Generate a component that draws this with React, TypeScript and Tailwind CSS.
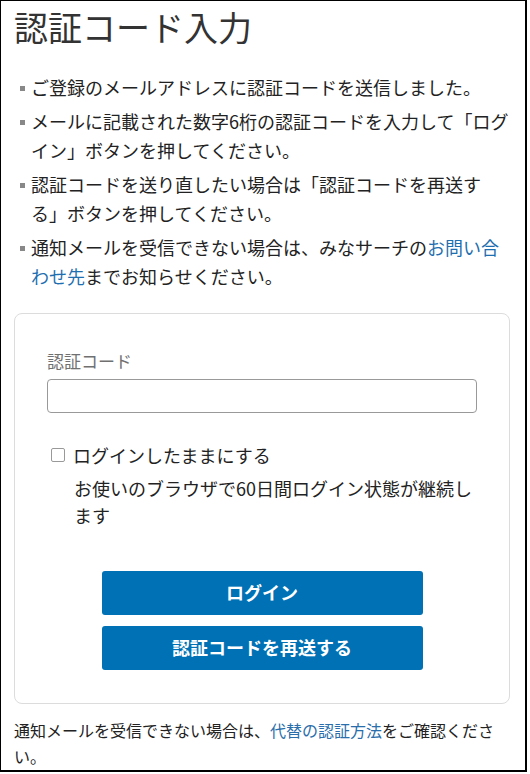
const notes = [
    { text: "ご登録のメールアドレスに認証コードを送信しました。" },
    { text: "メールに記載された数字6桁の認証コードを入力して「ログイン」ボタンを押してください。" },
    { text: "認証コードを送り直したい場合は「認証コードを再送する」ボタンを押してください。" },
]

function Bullet({ children }: { children: React.ReactNode }) {
    return (
        <li className="flex">
            <span className="w-[17px] shrink-0 flex pt-[13px] pl-[6px]">
                <span className="block w-[5px] h-[5px] bg-[#888]" />
            </span>
            <span className="flex-1">{children}</span>
        </li>
    )
}

export default function App() {
    return (
        <div
            className="w-[527px] h-[772px] border-l border-t border-r-2 border-b-2 border-black bg-white text-[#333] overflow-hidden [text-spacing-trim:space-all]"
            style={{ fontFamily: '"Noto Sans CJK JP", "Noto Sans", sans-serif' }}
        >
            <div className="w-[509px] pl-[13px] pt-[4px]">
                <h1 className="text-[34px] leading-[44px] font-normal text-[#333]">認証コード入力</h1>

                <ul className="mt-[24px] flex flex-col gap-[4px] text-[18px] leading-[29.5px] text-[#222]">
                    {notes.map(n => (
                        <Bullet key={n.text}>{n.text}</Bullet>
                    ))}
                    <Bullet>
                        通知メールを受信できない場合は、みなサーチの
                        <a className="text-[#1f6fb0]" href="#">お問い合わせ先</a>
                        までお知らせください。
                    </Bullet>
                </ul>

                <div className="mt-[21px] border border-[#dcdcdc] rounded-[8px] bg-white px-[32px] pt-[34px] pb-[33px]">
                    <label className="block text-[17px] leading-[26px] text-[#707070]">認証コード</label>
                    <input
                        className="mt-[5px] block w-full h-[34px] border border-[#999] rounded-[4px] px-2 outline-none text-[16px]"
                        type="text"
                    />

                    <div className="mt-[27px] flex items-center text-[18px] leading-[30px] text-[#222]">
                        <span className="ml-[4px] w-[14px] h-[14px] border border-[#999] rounded-[2px] bg-white" />
                        <span className="ml-[8px]">ログインしたままにする</span>
                    </div>
                    <p className="mt-[5px] pl-[27px] text-[18px] leading-[27px] text-[#222]">
                        お使いのブラウザで60日間ログイン状態が継続します
                    </p>

                    <div className="mt-[42px] flex flex-col items-center gap-[11px]">
                        <button className="w-[321px] h-[44px] rounded-[3px] bg-[#0071b4] text-white text-[18px] font-bold">
                            ログイン
                        </button>
                        <button className="w-[321px] h-[44px] rounded-[3px] bg-[#0071b4] text-white text-[18px] font-bold">
                            認証コードを再送する
                        </button>
                    </div>
                </div>

                <p className="mt-[13px] text-[16px] leading-[26px] text-[#222]">
                    通知メールを受信できない場合は、
                    <a className="text-[#2a6eab]" href="#">代替の認証方法</a>
                    をご確認ください。
                </p>
            </div>
        </div>
    )
}
